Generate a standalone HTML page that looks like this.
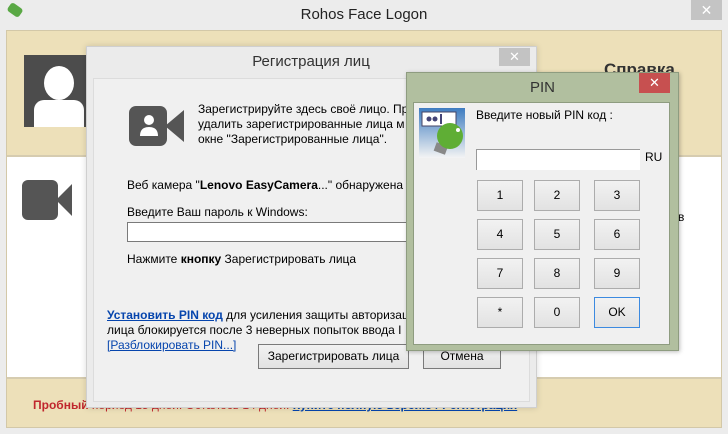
<!DOCTYPE html>
<html><head><meta charset="utf-8"><style>
*{margin:0;padding:0;box-sizing:border-box}
body{width:728px;height:434px;overflow:hidden;background:#ececec;font-family:"Liberation Sans","DejaVu Sans",sans-serif;font-size:12px;color:#000;position:relative}
.a{position:absolute}
.btn{position:absolute;background:linear-gradient(#f2f2f2,#e2e2e2);border:1px solid #acacac;text-align:center;font-size:12px}
</style></head><body>
<!-- main window -->
<div class="a" style="left:0;top:0;width:728px;height:30px;background:#ececec"></div>
<div class="a" style="left:8px;top:5px;width:14px;height:10px;background:#5aa845;border-radius:3px;transform:rotate(35deg)"></div>
<div class="a" style="left:0;top:6px;width:728px;text-align:center;font-size:15px;color:#222">Rohos Face Logon</div>
<div class="a" style="left:691px;top:0;width:31px;height:20px;background:#c4c4c4;color:#fff;text-align:center;font-size:14px;line-height:20px">✕</div>
<div class="a" style="left:6px;top:30px;width:716px;height:398px;border:1px solid #d3c8a8;background:#fff"></div>
<div class="a" style="left:7px;top:31px;width:714px;height:126px;background:#ede0b9;border-bottom:2px solid #d6ccb0"></div>
<div class="a" style="left:7px;top:377px;width:714px;height:50px;background:#ede0b9;border-top:2px solid #d6ccb0"></div>
<div class="a" style="left:24px;top:55px;width:62px;height:72px;background:#4c4c4c"></div>
<div class="a" style="left:44px;top:66px;width:30px;height:34px;border-radius:50%;background:#fff"></div>
<div class="a" style="left:34px;top:100px;width:50px;height:27px;border-radius:10px 10px 0 0;background:#fff"></div>
<svg class="a" style="left:22px;top:180px" width="52" height="40"><rect x="0" y="0" width="36" height="40" rx="6" fill="#555"/><path d="M34 20 L50 4 L50 36 Z" fill="#555"/></svg>
<div class="a" style="left:604px;top:60px;font-size:17px;font-weight:bold;color:#333">Справка</div>
<div class="a" style="left:678px;top:210px;font-size:12px">в</div>
<div class="a" style="left:33px;top:398px;font-size:12px;color:#c0262d;font-weight:bold">Пробный <span style="font-weight:normal">период 15 дней. Осталось 14 дней.</span> <a style="color:#0645ad;text-decoration:underline">Купите полную версию / Регистрация</a></div>
<!-- registration dialog -->
<div class="a" style="left:86px;top:46px;width:451px;height:362px;background:#ebebeb;border:1px solid #cfcfcf;box-shadow:0 0 6px rgba(0,0,0,.15)"></div>
<div class="a" style="left:86px;top:53px;width:450px;text-align:center;font-size:15px;color:#333">Регистрация лиц</div>
<div class="a" style="left:499px;top:48px;width:31px;height:18px;background:#c3c3c3;color:#fff;text-align:center;line-height:18px;font-size:13px">✕</div>
<div class="a" style="left:93px;top:78px;width:437px;height:324px;background:#f0f0f0;border:1px solid #dcdcdc"></div>
<svg class="a" style="left:129px;top:106px" width="56" height="40"><rect x="0" y="0" width="38" height="40" rx="7" fill="#555"/><path d="M36 20 L55 4 L55 36 Z" fill="#555"/><circle cx="20" cy="14" r="5" fill="#fff"/><path d="M11 30 Q11 21 20 21 Q29 21 29 30 Z" fill="#fff"/></svg>
<div class="a" style="left:198px;top:102px;line-height:15px;font-size:12px">Зарегистрируйте здесь своё лицо. Пр<br>удалить зарегистрированные лица м<br>окне "Зарегистрированные лица".</div>
<div class="a" style="left:127px;top:178px">Веб камера "<b>Lenovo EasyCamera</b>..." обнаружена</div>
<div class="a" style="left:127px;top:205px">Введите Ваш пароль к Windows:</div>
<div class="a" style="left:127px;top:222px;width:290px;height:20px;background:#fff;border:1px solid #7a7a7a"></div>
<div class="a" style="left:127px;top:252px">Нажмите <b>кнопку</b> Зарегистрировать лица</div>
<div class="a" style="left:107px;top:308px;line-height:15px"><a style="color:#0645ad;font-weight:bold;text-decoration:underline">Установить PIN код</a> для усиления защиты авторизац<br>лица блокируется после 3 неверных попыток ввода I<br><a style="color:#0645ad;text-decoration:underline">[Разблокировать PIN...]</a></div>
<div class="btn" style="left:258px;top:344px;width:151px;height:25px;line-height:23px;border-color:#7a7a7a">Зарегистрировать лица</div>
<div class="btn" style="left:423px;top:344px;width:78px;height:25px;line-height:23px;border-color:#7a7a7a">Отмена</div>
<!-- PIN dialog -->
<div class="a" style="left:406px;top:72px;width:273px;height:279px;background:#b1bf9f;border:1px solid #8e9c80;box-shadow:1px 1px 4px rgba(0,0,0,.25)"></div>
<div class="a" style="left:406px;top:79px;width:273px;text-align:center;font-size:15px;color:#333">PIN</div>
<div class="a" style="left:639px;top:73px;width:31px;height:20px;background:#c75050;color:#fff;text-align:center;line-height:20px;font-size:13px">✕</div>
<div class="a" style="left:413px;top:102px;width:257px;height:243px;background:#f0f0f0;border:1px solid #8e9c80"></div>
<svg class="a" style="left:419px;top:108px" width="46" height="50"><defs><linearGradient id="g" x1="0" y1="0" x2="0" y2="1"><stop offset="0" stop-color="#3e7cc0"/><stop offset="1" stop-color="#f4f4f4"/></linearGradient></defs><rect width="46" height="50" fill="url(#g)"/><rect x="3" y="4" width="34" height="14" fill="#fff" stroke="#446"/><circle cx="10" cy="11" r="2.5" fill="#447"/><circle cx="16" cy="11" r="2.5" fill="#447"/><rect x="21" y="6" width="2" height="10" fill="#447"/><rect x="16" y="36" width="12" height="9" fill="#888" transform="rotate(20 22 40)"/><circle cx="31" cy="28" r="13" fill="#5fae35"/><circle cx="39" cy="22" r="2" fill="#fff"/></svg>
<div class="a" style="left:476px;top:108px">Введите новый PIN код :</div>
<div class="a" style="left:476px;top:149px;width:164px;height:21px;background:#fff;border-top:1px solid #999;border-left:1px solid #999"></div>
<div class="a" style="left:645px;top:150px">RU</div>
<div class="btn" style="left:477px;top:180px;width:46px;height:31px;line-height:29px">1</div>
<div class="btn" style="left:534px;top:180px;width:46px;height:31px;line-height:29px">2</div>
<div class="btn" style="left:594px;top:180px;width:46px;height:31px;line-height:29px">3</div>
<div class="btn" style="left:477px;top:219px;width:46px;height:31px;line-height:29px">4</div>
<div class="btn" style="left:534px;top:219px;width:46px;height:31px;line-height:29px">5</div>
<div class="btn" style="left:594px;top:219px;width:46px;height:31px;line-height:29px">6</div>
<div class="btn" style="left:477px;top:258px;width:46px;height:31px;line-height:29px">7</div>
<div class="btn" style="left:534px;top:258px;width:46px;height:31px;line-height:29px">8</div>
<div class="btn" style="left:594px;top:258px;width:46px;height:31px;line-height:29px">9</div>
<div class="btn" style="left:477px;top:297px;width:46px;height:31px;line-height:29px">*</div>
<div class="btn" style="left:534px;top:297px;width:46px;height:31px;line-height:29px">0</div>
<div class="btn" style="left:594px;top:297px;width:46px;height:31px;line-height:29px;border-color:#3c8ae0">OK</div>
</body></html>
